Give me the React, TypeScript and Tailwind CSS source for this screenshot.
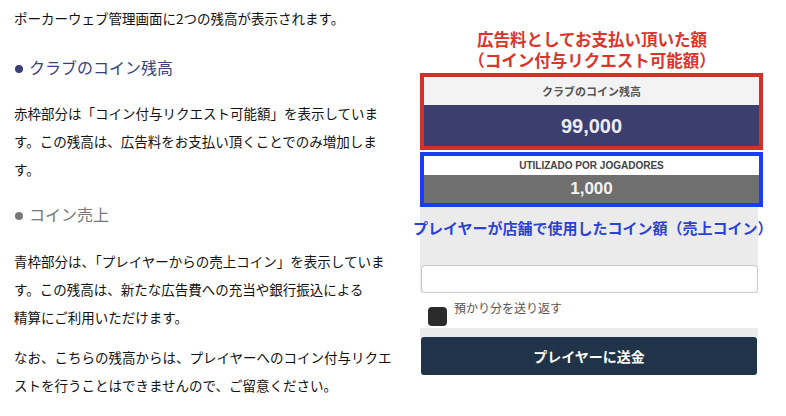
import React from "react";

const jp = { fontFamily: '"Noto Sans CJK JP", "Noto Sans", sans-serif' };
const lat = { fontFamily: '"Liberation Sans", "Noto Sans CJK JP", sans-serif' };

function Bullet() {
  return <span className="inline-block w-[8px] h-[8px] rounded-full bg-current mr-[6px] ml-[1px] align-middle -mt-[2px]" />;
}

export default function App() {
  return (
    <div className="w-[786px] h-[416px] bg-white flex overflow-hidden" style={jp}>
      <div className="w-[418px] shrink-0 pl-[14px] text-[13.5px] text-[#111] leading-[28px]">
        <p className="mt-[4px]">ポーカーウェブ管理画面に2つの残高が表示されます。</p>
        <p className="mt-[21px] text-[16px] text-[#3b3f7c]">
          <Bullet />
          クラブのコイン残高
        </p>
        <p className="mt-[18px]">
          赤枠部分は「コイン付与リクエスト可能額」を表示していま
          <br />
          す。この残高は、広告料をお支払い頂くことでのみ増加しま
          <br />
          す。
        </p>
        <p className="mt-[17px] text-[16px] text-[#777]">
          <Bullet />
          コイン売上
        </p>
        <p className="mt-[19px]">
          青枠部分は、「プレイヤーからの売上コイン」を表示していま
          <br />
          す。この残高は、新たな広告費への充当や銀行振込による
          <br />
          精算にご利用いただけます。
        </p>
        <p className="mt-[12px]">
          なお、こちらの残高からは、プレイヤーへのコイン付与リクエ
          <br />
          ストを行うことはできませんので、ご留意ください。
        </p>
      </div>
      <div className="w-[346px] shrink-0 pt-[29px] flex flex-col">
        <div className="pl-[2px] text-center font-bold text-[#d9352b] flex flex-col gap-[1px]">
          <p className="text-[16.5px] leading-[20px]">広告料としてお支払い頂いた額</p>
          <p className="text-[16.5px] leading-[20px]">（コイン付与リクエスト可能額）</p>
        </div>
        <div className="mt-[3px] ml-[2px] w-[343px] border-4 border-[#d4302a] flex flex-col">
          <div className="h-[28px] bg-[#f3f3f3] flex items-center justify-center text-[11px] font-bold text-[#555]">
            クラブのコイン残高
          </div>
          <div className="h-[41px] bg-[#3c3e6f] flex items-center justify-center text-[20px] font-bold text-[#ececf4]" style={lat}>
            99,000
          </div>
        </div>
        <div className="mt-[2px] ml-[2px] w-[343px] border-4 border-[#1a3cf2] flex flex-col">
          <div className="h-[19px] bg-white flex items-center justify-center text-[10px] font-bold text-[#444]" style={lat}>
            UTILIZADO POR JOGADORES
          </div>
          <div className="h-[28px] bg-[#6f6f6f] flex items-center justify-center text-[17px] font-bold text-[#f2f2f2]" style={lat}>
            1,000
          </div>
        </div>
        <div className="ml-[2px] w-[338px] bg-[#ebebeb] flex flex-col pb-[9px]">
          <p className="-ml-[7px] mt-[9px] h-[24px] whitespace-nowrap text-[15px] leading-[24px] font-bold text-[#2b42d6]">
            プレイヤーが店舗で使用したコイン額（売上コイン）
          </p>
          <div className="mt-[25px] ml-[1px] h-[28px] bg-white border border-[#c9c9c9] rounded-[4px]" />
          <div className="h-[35px] bg-white flex items-start gap-[7px] pl-[8px] pt-[6px]">
            <div className="mt-[8px] w-[19px] h-[19px] rounded-[4px] bg-[#2b2b2b]" />
            <span className="text-[12px] leading-[18px] text-[#555]">預かり分を送り返す</span>
          </div>
        </div>
        <button className="ml-[3px] w-[336px] h-[38px] bg-[#1f3448] rounded-[3px] text-white text-[14px] font-bold flex items-center justify-center">
          プレイヤーに送金
        </button>
      </div>
    </div>
  );
}
